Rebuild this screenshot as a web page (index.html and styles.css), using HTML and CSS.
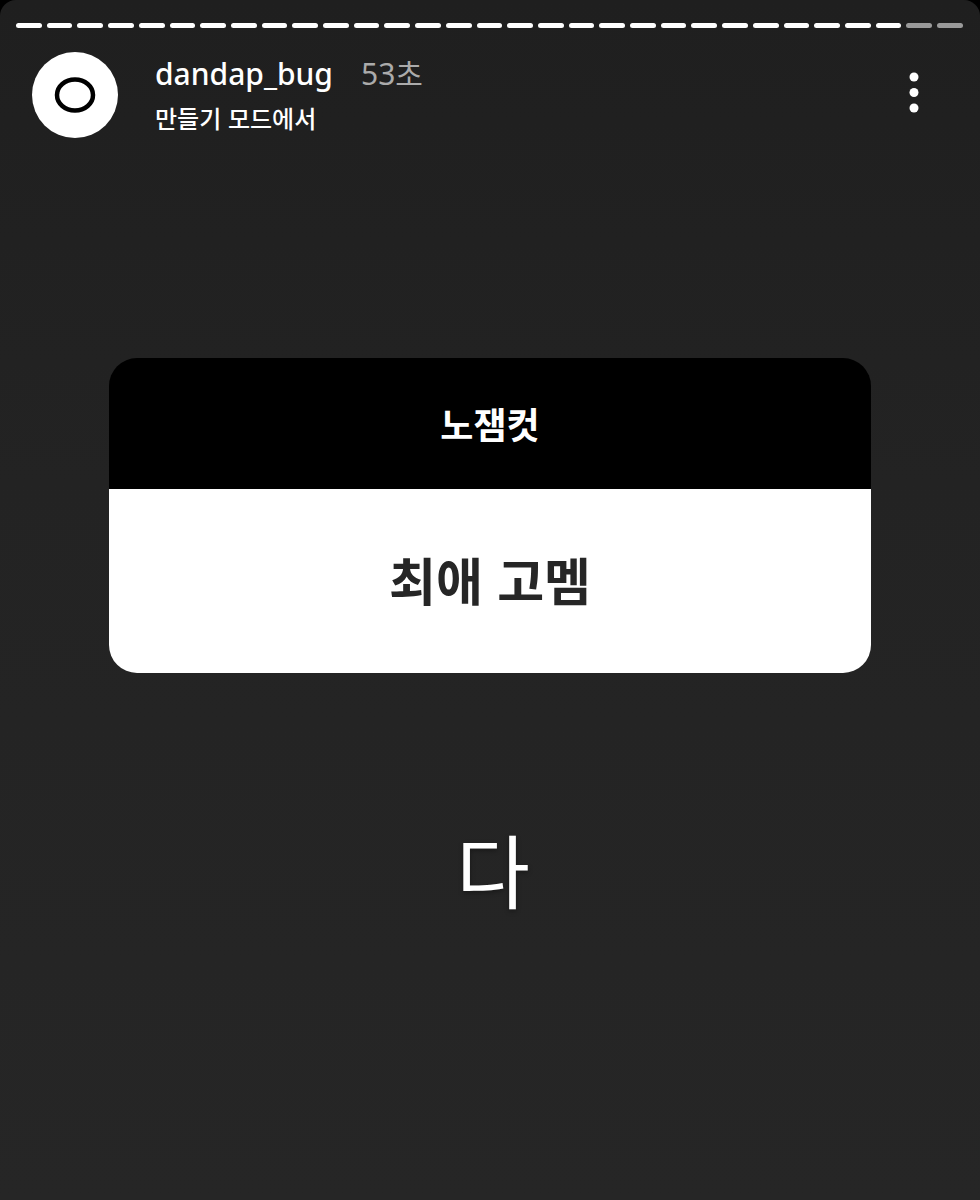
FILE: index.html
```html
<!DOCTYPE html>
<html lang="ko">
<head>
    <meta charset="UTF-8">
    <meta name="viewport" content="width=device-width, initial-scale=1.0">
    <title>dandap_bug 스토리</title>
    <link rel="stylesheet" href="styles.css">
</head>
<body>
    <div class="story">
        <!-- Story progress segments -->
        <div class="progress">
            <span class="seg"></span><span class="seg"></span><span class="seg"></span><span class="seg"></span>
            <span class="seg"></span><span class="seg"></span><span class="seg"></span><span class="seg"></span>
            <span class="seg"></span><span class="seg"></span><span class="seg"></span><span class="seg"></span>
            <span class="seg"></span><span class="seg"></span><span class="seg"></span><span class="seg"></span>
            <span class="seg"></span><span class="seg"></span><span class="seg"></span><span class="seg"></span>
            <span class="seg"></span><span class="seg"></span><span class="seg"></span><span class="seg"></span>
            <span class="seg"></span><span class="seg"></span><span class="seg"></span><span class="seg"></span>
            <span class="seg"></span>
            <span class="seg pending"></span><span class="seg pending"></span>
        </div>

        <div class="header">
            <div class="avatar">
                <svg width="42" height="38" viewBox="0 0 42 38">
                    <ellipse cx="21" cy="19" rx="18" ry="15.5" fill="none" stroke="#000" stroke-width="4.5"/>
                </svg>
            </div>
            <div class="info">
                <div class="name-row">
                    <span class="username">dandap_bug</span>
                    <span class="time">53초</span>
                </div>
                <div class="subtitle">만들기 모드에서</div>
            </div>
            <button class="more" aria-label="더 보기">
                <svg width="12" height="44" viewBox="0 0 12 44">
                    <circle cx="6" cy="5" r="4.5" fill="#fff"/>
                    <circle cx="6" cy="20.5" r="4.5" fill="#fff"/>
                    <circle cx="6" cy="36" r="4.5" fill="#fff"/>
                </svg>
            </button>
        </div>

        <div class="card">
            <div class="card-head">노잼컷</div>
            <div class="card-body">최애 고멤</div>
        </div>

        <div class="answer">다</div>
    </div>
</body>
</html>
```

FILE: styles.css
```css
* {
    box-sizing: border-box;
    margin: 0;
    padding: 0;
}

body {
    background-color: #000;
    font-family: "Noto Sans", "Noto Sans CJK KR", sans-serif;
    color: #fff;
}

.story {
    height: 1200px;
    border-radius: 16px 16px 0 0;
    background: linear-gradient(#1f1f1f, #232323 40%, #262626);
    display: flex;
    flex-direction: column;
    overflow: hidden;
}

.progress {
    display: flex;
    gap: 5px;
    padding: 23px 17px 0 16px;
}

.seg {
    flex: 1;
    height: 5px;
    border-radius: 3px;
    background-color: #fff;
}

.seg.pending {
    background-color: #9a9a9a;
}

.header {
    display: flex;
    align-items: flex-start;
    margin-top: 24px;
    padding: 0 60px 0 32px;
}

.avatar {
    width: 86px;
    height: 86px;
    border-radius: 50%;
    background-color: #fff;
    display: flex;
    justify-content: center;
    align-items: center;
    flex-shrink: 0;
}

.info {
    margin-left: 37px;
    margin-top: 3px;
}

.name-row {
    display: flex;
    align-items: baseline;
    line-height: 38px;
}

.username {
    font-size: 30px;
    font-weight: 500;
    color: #fff;
}

.time {
    font-size: 30px;
    color: #ababab;
    margin-left: 28px;
}

.subtitle {
    font-family: "Noto Sans CJK KR", sans-serif;
    font-size: 24px;
    font-weight: 500;
    line-height: 34px;
    margin-top: 8px;
    color: #fff;
}

.more {
    margin-left: auto;
    margin-top: 20px;
    background: none;
    border: none;
    display: block;
}

.more svg {
    display: block;
}

.card {
    width: 762px;
    margin: 220px auto 0;
    border-radius: 28px;
    overflow: hidden;
    font-family: "Noto Sans CJK KR", sans-serif;
    font-weight: 700;
}

.card-head {
    height: 131px;
    background-color: #000;
    color: #fff;
    font-size: 36px;
    display: flex;
    justify-content: center;
    align-items: center;
    padding-bottom: 2px;
}

.card-body {
    height: 184px;
    background-color: #fff;
    color: #262626;
    font-size: 51px;
    display: flex;
    justify-content: center;
    align-items: center;
    padding-bottom: 4px;
}

.answer {
    margin-top: 154px;
    padding-left: 6px;
    font-family: "Noto Sans CJK KR", sans-serif;
    font-size: 80px;
    font-weight: 400;
    line-height: 1;
    text-align: center;
    color: #fff;
    text-shadow: 0 2px 5px rgba(0, 0, 0, 0.35);
}
```
